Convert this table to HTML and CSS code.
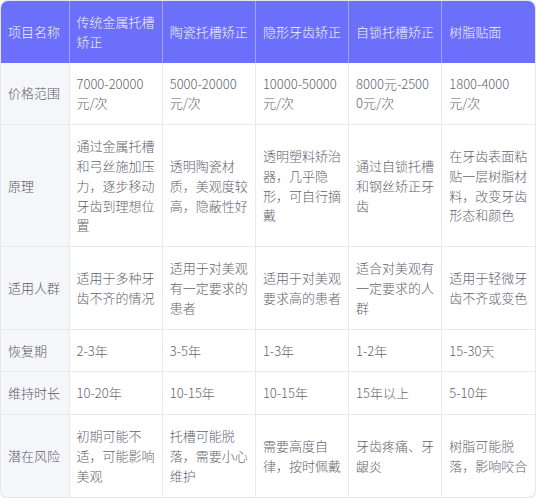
FILE: index.html
```html
<!DOCTYPE html>
<html lang="zh">
<head>
<meta charset="utf-8">
<link rel="stylesheet" href="styles.css">
</head>
<body>
<div class="wrap">
<table class="cmp">
<colgroup>
<col class="c-head"><col><col><col><col><col>
</colgroup>
<thead>
<tr>
<th>项目名称</th><th>传统金属托槽矫正</th><th>陶瓷托槽矫正</th><th>隐形牙齿矫正</th><th>自锁托槽矫正</th><th>树脂贴面</th>
</tr>
</thead>
<tbody>
<tr><td class="rh">价格范围</td><td>7000-20000元/次</td><td>5000-20000元/次</td><td>10000-50000元/次</td><td>8000元-25000元/次</td><td>1800-4000<span class="unit">元/次</span></td></tr>
<tr><td class="rh">原理</td><td>通过金属托槽和弓丝施加压力，逐步移动牙齿到理想位置</td><td>透明陶瓷材质，美观度较高，隐蔽性好</td><td>透明塑料矫治器，几乎隐形，可自行摘戴</td><td>通过自锁托槽和钢丝矫正牙齿</td><td>在牙齿表面粘贴一层树脂材料，改变牙齿形态和颜色</td></tr>
<tr><td class="rh">适用人群</td><td>适用于多种牙齿不齐的情况</td><td>适用于对美观有一定要求的患者</td><td>适用于对美观要求高的患者</td><td>适合对美观有一定要求的人群</td><td>适用于轻微牙齿不齐或变色</td></tr>
<tr><td class="rh">恢复期</td><td>2-3年</td><td>3-5年</td><td>1-3年</td><td>1-2年</td><td>15-30天</td></tr>
<tr><td class="rh">维持时长</td><td>10-20年</td><td>10-15年</td><td>10-15年</td><td>15年以上</td><td>5-10年</td></tr>
<tr><td class="rh">潜在风险</td><td>初期可能不适，可能影响美观</td><td>托槽可能脱落，需要小心维护</td><td>需要高度自律，按时佩戴</td><td>牙齿疼痛、牙龈炎</td><td>树脂可能脱落，影响咬合</td></tr>
</tbody>
</table>
</div>
</body>
</html>
```
FILE: styles.css
```css
html, body {
  margin: 0;
  padding: 0;
  background: #ffffff;
}
body {
  font-family: "Noto Sans CJK SC", "Noto Sans", sans-serif;
  font-size: 13px;
  font-weight: 300;
  color: #64646e;
}
.wrap {
  width: 536px;
  border-radius: 8px;
  overflow: hidden;
  box-shadow: 0 1px 3px rgba(0, 0, 0, 0.1);
  border: 1px solid #e6e6ee;
  box-sizing: border-box;
}
.cmp {
  width: 100%;
  border-collapse: collapse;
  table-layout: fixed;
}
.c-head {
  width: 68px;
}
.cmp th,
.cmp td {
  padding: 11px 7px;
  line-height: 19.8px;
  text-align: left;
  vertical-align: middle;
  word-break: break-all;
  font-weight: 300;
}
.unit {
  display: inline-block;
  white-space: nowrap;
}
.cmp th {
  background: #6c6ff9;
  color: #f1f1ff;
  border-left: 1px solid rgba(255, 255, 255, 0.35);
}
.cmp th:first-child {
  border-left: none;
}
.cmp td {
  border-left: 1px solid #e9e9ef;
  border-top: 1px solid #e9e9ef;
}
.cmp tbody tr:first-child td {
  border-top: none;
}
.cmp td.rh {
  border-left: none;
  background: #f5f6f9;
  color: #5a5a66;
}
```
